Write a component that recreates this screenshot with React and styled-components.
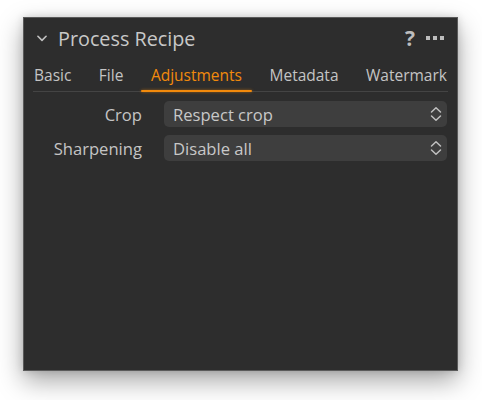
import React from 'react';
import styled, { createGlobalStyle } from 'styled-components';

const GlobalStyle = createGlobalStyle`
  html, body {
    margin: 0;
    padding: 0;
    background: #ffffff;
  }
  body {
    font-family: "Open Sans", Lato, sans-serif;
  }
`;

const Page = styled.div`
  padding: 17px 0 29px 23px;
`;

const Panel = styled.div`
  width: 435px;
  height: 354px;
  box-sizing: border-box;
  background: #2d2d2d;
  border: 1px solid #5a5a5a;
  box-shadow: 0 10px 24px rgba(0, 0, 0, 0.35), 0 0 8px rgba(0, 0, 0, 0.15);
  color: #c4c4c4;
  padding: 0 8px;
`;

const Header = styled.div`
  display: flex;
  align-items: center;
  height: 40px;
  padding: 0 5px 0 3px;
`;

const Title = styled.div`
  font-size: 19.8px;
  color: #c8c8c8;
  margin-left: 9px;
  flex: 1;
`;

const HeaderActions = styled.div`
  display: flex;
  align-items: center;
  gap: 11px;
  color: #bdbdbd;
`;

const Help = styled.span`
  font-size: 21px;
  font-weight: 700;
`;

const Tabs = styled.div`
  display: flex;
  justify-content: space-between;
  height: 33px;
  align-items: flex-end;
  border-bottom: 1px solid #444;
  margin: 0 1px;
`;

const Tab = styled.div`
  position: relative;
  font-size: 15.5px;
  padding: 0 10px 5px;
  color: ${p => (p.$active ? '#f28a0c' : '#c4c4c4')};
  ${p => (p.$first ? 'padding-left: 1px;' : '')}
  ${p => (p.$last ? 'padding-right: 1px;' : '')}
  &::after {
    content: '';
    display: ${p => (p.$active ? 'block' : 'none')};
    position: absolute;
    left: 0;
    right: 0;
    bottom: -1px;
    height: 2px;
    background: #f28a0c;
    box-shadow: 0 0 3px rgba(242, 138, 12, 0.6);
    border-radius: 1px;
  }
`;

const Form = styled.div`
  display: grid;
  grid-template-columns: 110px 1fr;
  column-gap: 22px;
  row-gap: 8px;
  padding: 9px 2px 0 0;
`;

const Label = styled.div`
  font-size: 16.6px;
  text-align: right;
  align-self: center;
  color: #c4c4c4;
`;

const Select = styled.div`
  display: flex;
  align-items: center;
  justify-content: space-between;
  height: 26px;
  background: #3e3e3e;
  border-radius: 5px;
  padding: 0 5px 0 9px;
  font-size: 16.6px;
  color: #c8c8c8;
`;

const Chevron = ({ size = 12 }) => (
  <svg width={size} height={size} viewBox="0 0 12 12" fill="none">
    <path d="M2.5 4.5 L6 8 L9.5 4.5" stroke="#c0c0c0" strokeWidth="1.4" strokeLinecap="round" strokeLinejoin="round" />
  </svg>
);

const Stepper = () => (
  <svg width="12" height="16" viewBox="0 0 12 16" fill="none">
    <path d="M1.5 6 L6 1.8 L10.5 6" stroke="#c0c0c0" strokeWidth="1.5" strokeLinecap="round" strokeLinejoin="round" />
    <path d="M1.5 10 L6 14.2 L10.5 10" stroke="#c0c0c0" strokeWidth="1.5" strokeLinecap="round" strokeLinejoin="round" />
  </svg>
);

const Dots = () => (
  <svg width="18" height="4" viewBox="0 0 18 4">
    <rect x="0" y="0" width="4" height="4" fill="#bdbdbd" />
    <rect x="7" y="0" width="4" height="4" fill="#bdbdbd" />
    <rect x="14" y="0" width="4" height="4" fill="#bdbdbd" />
  </svg>
);

const tabs = ['Basic', 'File', 'Adjustments', 'Metadata', 'Watermark'];

const rows = [
  { label: 'Crop', value: 'Respect crop' },
  { label: 'Sharpening', value: 'Disable all' },
];

export default function App() {
  return (
    <>
      <GlobalStyle />
      <Page>
        <Panel>
          <Header>
            <Chevron size={14} />
            <Title>Process Recipe</Title>
            <HeaderActions>
              <Help>?</Help>
              <Dots />
            </HeaderActions>
          </Header>
          <Tabs>
            {tabs.map((t, i) => (
              <Tab
                key={t}
                $active={t === 'Adjustments'}
                $first={i === 0}
                $last={i === tabs.length - 1}
              >
                {t}
              </Tab>
            ))}
          </Tabs>
          <Form>
            {rows.map(r => (
              <React.Fragment key={r.label}>
                <Label>{r.label}</Label>
                <Select>
                  {r.value}
                  <Stepper />
                </Select>
              </React.Fragment>
            ))}
          </Form>
        </Panel>
      </Page>
    </>
  );
}
